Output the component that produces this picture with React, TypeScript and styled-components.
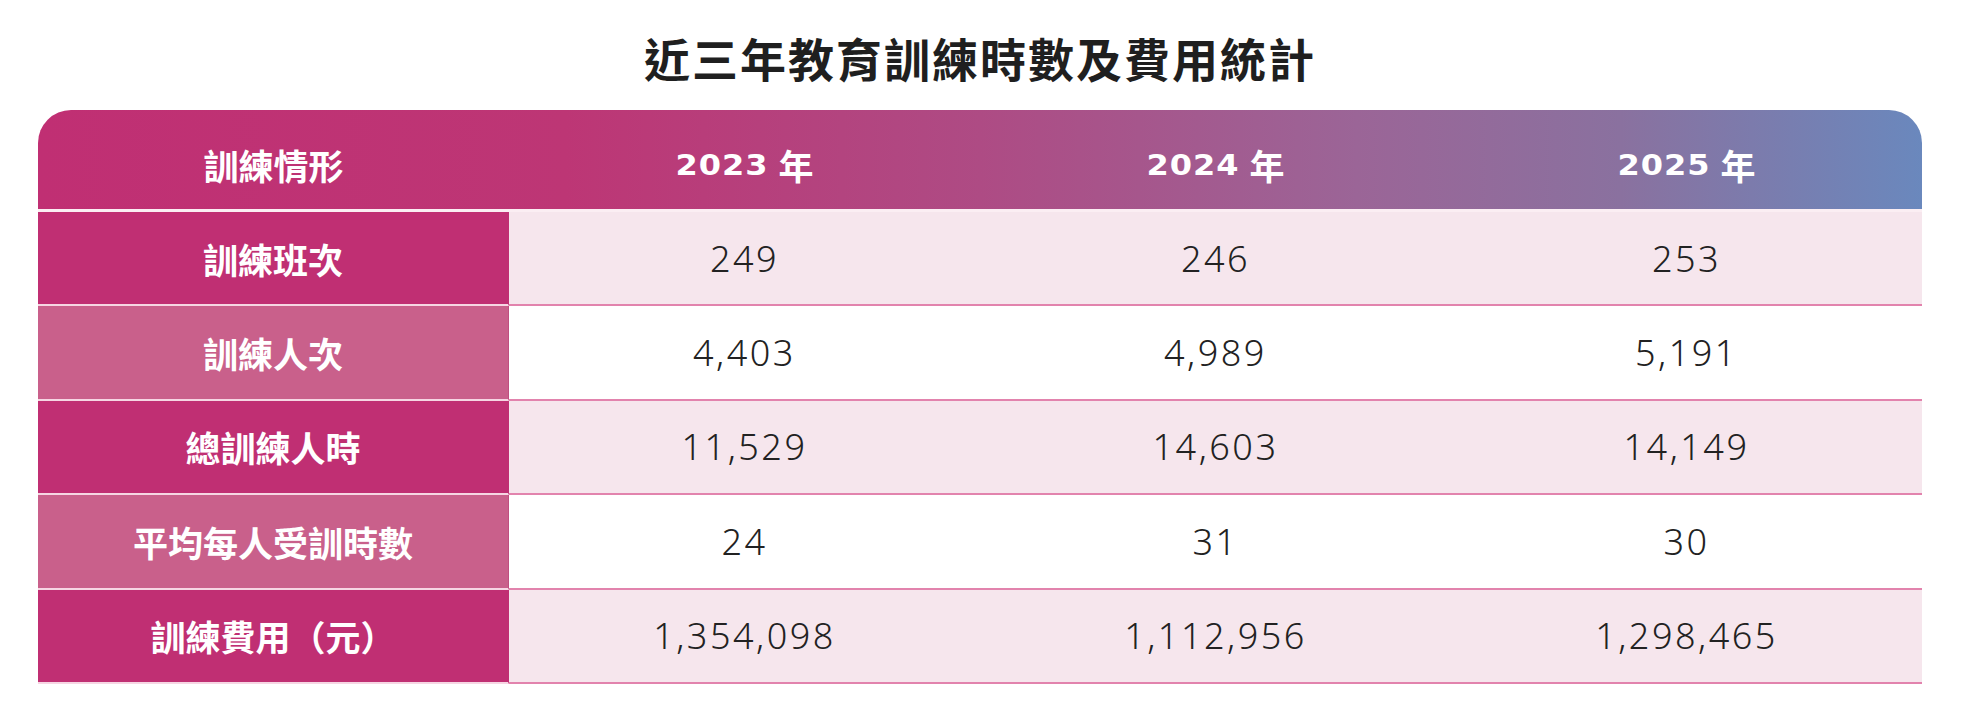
import React from 'react';
import styled, {createGlobalStyle} from 'styled-components';

const GlobalStyle = createGlobalStyle`
  html, body {
    margin: 0;
    padding: 0;
    background: #fff;
  }
  body {
    font-family: "Noto Sans", "Noto Sans CJK TC", sans-serif;
  }
`

const Page = styled.div`
  width: 1884px;
  margin-left: 38px;
  display: flex;
  flex-direction: column;
`

const Title = styled.h1`
  margin: 0;
  height: 110px;
  display: flex;
  align-items: center;
  justify-content: center;
  padding-top: 4px;
  box-sizing: border-box;
  font-family: "Noto Sans CJK TC", sans-serif;
  font-weight: 700;
  font-size: 46px;
  letter-spacing: 2px;
  color: #1f1f1f;
`

const Table = styled.div`
  display: grid;
  grid-template-columns: repeat(4, 1fr);
`

const HeaderRow = styled.div`
  grid-column: 1 / -1;
  display: grid;
  grid-template-columns: repeat(4, 1fr);
  height: 99px;
  border-radius: 33px 33px 0 0;
  border-bottom: 3px solid #fbeef3;
  background: linear-gradient(90deg, #c02f73 0%, #bd3675 28%, #ae4b84 50%, #9b6597 70%, #8a719f 84%, #6a88bd 100%);
`

const HeadCell = styled.div`
  display: flex;
  align-items: center;
  justify-content: center;
  gap: 10px;
  padding-top: 10px;
  color: #fff;
  font-family: "Noto Sans CJK TC", sans-serif;
  font-weight: 700;
  font-size: 35px;
`

const Year = styled.span`
  font-family: "DejaVu Sans", sans-serif;
  font-weight: 700;
  font-size: 32px;
  letter-spacing: 1px;
  transform: scaleY(0.9);
`

const Label = styled.div<{ $light: boolean }>`
  height: 94.4px;
  box-sizing: border-box;
  display: flex;
  align-items: center;
  justify-content: center;
  background: ${p => p.$light ? '#c9608b' : '#c02f73'};
  border-bottom: 2px solid #f6d6e3;
  border-right: 1px solid ${p => p.$light ? '#c04f80' : '#c02f73'};
  color: #fff;
  font-family: "Noto Sans CJK TC", sans-serif;
  font-weight: 700;
  font-size: 35px;
`

const Cell = styled.div<{ $shade: boolean }>`
  height: 94.4px;
  box-sizing: border-box;
  display: flex;
  align-items: center;
  justify-content: center;
  background: ${p => p.$shade ? '#f6e6ed' : '#fff'};
  border-bottom: 2px solid #e283ad;
  color: #222;
  font-family: "Noto Sans", sans-serif;
  font-weight: 300;
  font-size: 36px;
  letter-spacing: 2.5px;
`

const years = ['2023', '2024', '2025']

const rows = [
    {label: '訓練班次', values: ['249', '246', '253']},
    {label: '訓練人次', values: ['4,403', '4,989', '5,191']},
    {label: '總訓練人時', values: ['11,529', '14,603', '14,149']},
    {label: '平均每人受訓時數', values: ['24', '31', '30']},
    {label: '訓練費用（元）', values: ['1,354,098', '1,112,956', '1,298,465']},
]

export default function App() {
    return (
        <>
            <GlobalStyle/>
            <Page>
                <Title>近三年教育訓練時數及費用統計</Title>
                <Table>
                    <HeaderRow>
                        <HeadCell>訓練情形</HeadCell>
                        {years.map(y => (
                            <HeadCell key={y}>
                                <Year>{y}</Year>年
                            </HeadCell>
                        ))}
                    </HeaderRow>
                    {rows.map((row, i) => (
                        <React.Fragment key={row.label}>
                            <Label $light={i % 2 === 1}>{row.label}</Label>
                            {row.values.map((v, j) => (
                                <Cell key={j} $shade={i % 2 === 0}>{v}</Cell>
                            ))}
                        </React.Fragment>
                    ))}
                </Table>
            </Page>
        </>
    );
}
